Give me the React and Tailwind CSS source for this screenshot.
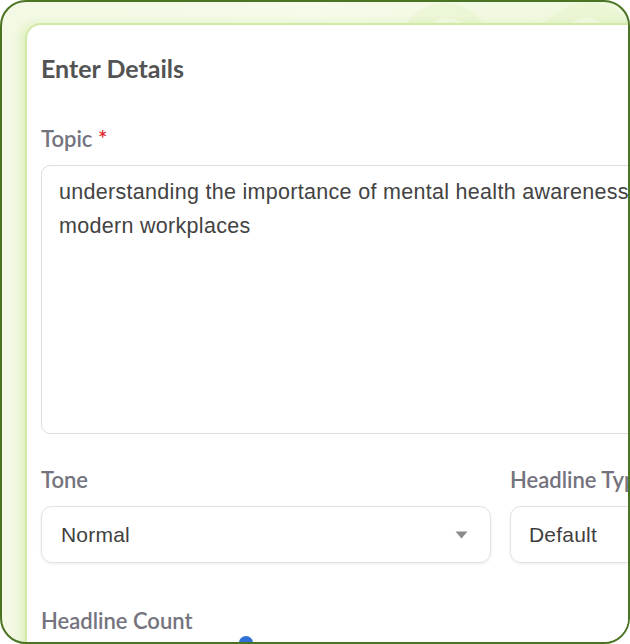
import React from "react";

export default function App() {
  const body = { fontFamily: "'Liberation Sans', Arial, sans-serif" };
  return (
    <div className="w-[630px] h-[644px] bg-white">
      <div className="relative w-[630px] h-[644px] overflow-hidden rounded-[26px] border-2 border-[#4a7424] bg-gradient-to-r from-[#f3f9e4] via-[#f6fbea] to-[#eff8dc]">
        {/* decorative rings */}
        <div className="absolute left-[397px] top-[1px] w-[92px] h-[92px] rounded-full bg-[#e9f5d2]/70" />
        <div className="absolute left-[424px] top-[16px] w-[42px] h-[42px] rounded-full bg-[#f4fae8]" />
        <div className="absolute left-[531px] top-[1px] w-[110px] h-[110px] rounded-full bg-[#e9f5d2]/70" />
        <div className="absolute left-[559px] top-[16px] w-[50px] h-[50px] rounded-full bg-[#f4fae8]" />

        <div
          className="relative ml-[23px] mt-[21px] w-[700px] h-[700px] rounded-tl-[16px] border-t-2 border-l-2 border-[#d2eaa6] bg-white shadow-[-5px_0_8px_rgba(190,225,130,0.35)] pl-[14px] pt-[27px]"
          style={{ fontFamily: "Lato, 'Liberation Sans', sans-serif" }}
        >
          <h2 className="text-[25px] leading-[32px] font-bold text-[#535353]">Enter Details</h2>

          <div className="mt-[41px] text-[22px] leading-[28px] font-semibold text-[#74737e]">
            Topic <span className="text-[#e3262c]">*</span>
          </div>
          <div
            className="mt-[12px] w-[620px] h-[269px] rounded-[9px] border border-[#dedede] pl-[17px] pt-[9px] text-[21.5px] leading-[34px] tracking-[0.3px] text-[#434343] whitespace-nowrap"
            style={body}
          >
            understanding the importance of mental health awareness in
            <br />
            modern workplaces
          </div>

          <div className="mt-[32px] flex gap-[19px]">
            <div className="w-[450px]">
              <div className="text-[22px] leading-[28px] font-semibold text-[#74737e]">Tone</div>
              <div className="mt-[12px] h-[57px] rounded-[11px] border border-[#e2e2e2] shadow-[0_1px_3px_rgba(0,0,0,0.08)] flex items-center justify-between pl-[19px] pr-[22px]">
                <span className="text-[21px] tracking-[0.2px] text-[#3f3f3f]" style={body}>Normal</span>
                <svg width="13" height="8" viewBox="0 0 13 8"><path d="M0.5 0.5 L12.5 0.5 L6.5 7.5 Z" fill="#8a8a8a" /></svg>
              </div>
            </div>
            <div className="w-[200px]">
              <div className="text-[22px] leading-[28px] font-semibold text-[#74737e] whitespace-nowrap">Headline Type</div>
              <div className="mt-[12px] h-[57px] rounded-[11px] border border-[#e2e2e2] shadow-[0_1px_3px_rgba(0,0,0,0.08)] flex items-center pl-[18px]">
                <span className="text-[21px] tracking-[0.2px] text-[#3f3f3f]" style={body}>Default</span>
              </div>
            </div>
          </div>

          <div className="mt-[44px] text-[22px] leading-[28px] font-semibold text-[#74737e]">Headline Count</div>
          <div className="mt-[1px] ml-[198px] w-[14px] h-[14px] rounded-full bg-[#2f6fd6]" />
        </div>
      </div>
    </div>
  );
}
